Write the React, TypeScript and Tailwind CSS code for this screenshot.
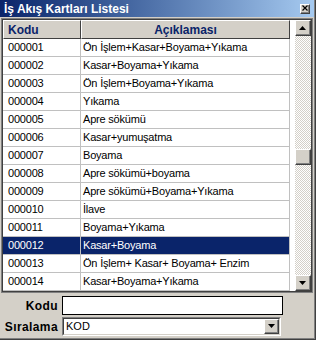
import React from 'react';

interface Row {
  kod: string;
  aciklama: string;
}

const rows: Row[] = [
  { kod: '000001', aciklama: 'Ön İşlem+Kasar+Boyama+Yıkama' },
  { kod: '000002', aciklama: 'Kasar+Boyama+Yıkama' },
  { kod: '000003', aciklama: 'Ön İşlem+Boyama+Yıkama' },
  { kod: '000004', aciklama: 'Yıkama' },
  { kod: '000005', aciklama: 'Apre sökümü' },
  { kod: '000006', aciklama: 'Kasar+yumuşatma' },
  { kod: '000007', aciklama: 'Boyama' },
  { kod: '000008', aciklama: 'Apre sökümü+boyama' },
  { kod: '000009', aciklama: 'Apre sökümü+Boyama+Yıkama' },
  { kod: '000010', aciklama: 'İlave' },
  { kod: '000011', aciklama: 'Boyama+Yıkama' },
  { kod: '000012', aciklama: 'Kasar+Boyama' },
  { kod: '000013', aciklama: 'Ön İşlem+ Kasar+ Boyama+ Enzim' },
  { kod: '000014', aciklama: 'Kasar+Boyama+Yıkama' },
];

const selected = '000012';

const Arrow = ({ down }: { down?: boolean }) => (
  <svg width="7" height="4" viewBox="0 0 7 4">
    {down ? <polygon points="0,0 7,0 3.5,4" fill="#000" /> : <polygon points="3.5,0 7,4 0,4" fill="#000" />}
  </svg>
);

// raised 3D button, classic windows look
const RaisedButton = ({ children, className }: { children?: React.ReactNode; className?: string }) => (
  <div className={`bg-[#d4d0c8] border-t border-l border-t-white border-l-white border-b border-r border-b-[#404040] border-r-[#404040] ${className ?? ''}`}>
    <div className="w-full h-full flex items-center justify-center border-b border-r border-b-[#808080] border-r-[#808080]">
      {children}
    </div>
  </div>
);

const App = () => {
  return (
    <div className="w-[316px] h-[340px] bg-[#d4d0c8] border-r border-b border-[#404040] overflow-hidden font-['Liberation_Sans',Arial,sans-serif] text-[11px] text-black">
      <div className="w-full h-full flex flex-col border-r border-b border-[#808080]">
        {/* title bar */}
        <div className="h-[17px] shrink-0 flex items-center justify-between pl-[4px] pr-[4px] bg-gradient-to-r from-[#0a246a] to-[#a6caf0]">
          <span className="text-white font-bold text-[12px] leading-none">İş Akış Kartları Listesi</span>
          <RaisedButton className="w-[10px] h-[10px]">
            <svg width="6" height="6" viewBox="0 0 6 6">
              <path d="M0.5 0.5 L5.5 5.5 M5.5 0.5 L0.5 5.5" stroke="#000" strokeWidth="1.2" />
            </svg>
          </RaisedButton>
        </div>

        {/* grid */}
        <div className="mt-[1px] ml-[1px] w-[312px] h-[275px] shrink-0 border border-[#808080]">
          <div className="w-full h-full border border-[#404040] bg-white flex">
            <div className="flex flex-col">
              {/* header */}
              <div className="flex h-[19px] shrink-0">
                <div className="w-[78px] bg-[#d4d0c8] border-r border-b border-[#404040] border-t border-l border-t-white border-l-white flex items-center pl-[4px] font-bold text-[12px] text-[#0a246a]">
                  Kodu
                </div>
                <div className="w-[209px] bg-[#d4d0c8] border-r border-b border-[#404040] border-t border-l border-t-white border-l-white flex items-center justify-center font-bold text-[12px] text-[#0a246a]">
                  Açıklaması
                </div>
              </div>
              {/* body */}
              {rows.map(r => {
                const sel = r.kod === selected;
                return (
                  <div key={r.kod} className={`flex h-[18px] shrink-0 tracking-[-0.2px] ${sel ? 'bg-[#0a246a] text-white' : ''}`}>
                    <div className="w-[78px] border-r border-b border-[#c0c0c0] flex items-center pl-[5px] whitespace-nowrap">
                      {r.kod}
                    </div>
                    <div className="w-[209px] border-r border-b border-[#c0c0c0] flex items-center pl-[2px] whitespace-nowrap overflow-hidden">
                      {r.aciklama}
                    </div>
                  </div>
                );
              })}
            </div>
            <div className="w-[5px]" />
            {/* scrollbar */}
            <div className="w-[16px] flex flex-col bg-[image:repeating-conic-gradient(#d4d0c8_0_25%,#ffffff_0_50%)] bg-[length:2px_2px]">
              <RaisedButton className="w-[16px] h-[16px] shrink-0">
                <Arrow />
              </RaisedButton>
              <div className="flex-1 flex flex-col">
                <div className="h-[113px]" />
                <RaisedButton className="w-[16px] h-[16px]" />
              </div>
              <RaisedButton className="w-[16px] h-[16px] shrink-0">
                <Arrow down />
              </RaisedButton>
            </div>
          </div>
        </div>

        {/* bottom fields */}
        <div className="flex flex-col gap-[2px] pt-[3px]">
          <div className="flex items-center">
            <span className="w-[58px] text-right font-bold text-[12px] tracking-[0.4px]">Kodu</span>
            <div className="ml-[4px] w-[221px] h-[19px] bg-white border border-black" />
          </div>
          <div className="flex items-center">
            <span className="w-[58px] text-right font-bold text-[12px] tracking-[0.4px]">Sıralama</span>
            <div className="ml-[4px] w-[219px] h-[19px] border-t border-l border-[#808080] border-b border-r border-b-white border-r-white">
              <div className="w-full h-full bg-white border-t border-l border-[#404040] border-b border-r border-b-[#d4d0c8] border-r-[#d4d0c8] flex items-center justify-between">
                <span className="pl-[2px]">KOD</span>
                <RaisedButton className="w-[15px] h-[15px]">
                  <Arrow down />
                </RaisedButton>
              </div>
            </div>
          </div>
        </div>
      </div>
    </div>
  );
};

export default App;
